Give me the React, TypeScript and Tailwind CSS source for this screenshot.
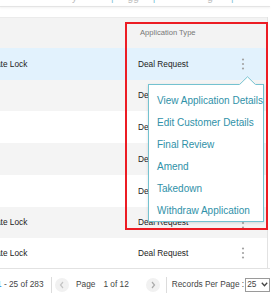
import React from "react";

const rows = [
  { left: "Rate Lock", type: "Deal Request", bg: "bg-[#e2f2fd]", h: "h-[32px]" },
  { left: "", type: "Deal Request", bg: "bg-[#f4f4f4]", h: "h-[31px]" },
  { left: "", type: "Deal Request", bg: "bg-white", h: "h-[32px]" },
  { left: "", type: "Deal Request", bg: "bg-[#f4f4f4]", h: "h-[32px]" },
  { left: "", type: "Deal Request", bg: "bg-white", h: "h-[32px]" },
  { left: "Rate Lock", type: "Deal Request", bg: "bg-[#f4f4f4]", h: "h-[31px]" },
  { left: "Rate Lock", type: "Deal Request", bg: "bg-white", h: "h-[30px]" },
];

const menu = [
  "View Application Details",
  "Edit Customer Details",
  "Final Review",
  "Amend",
  "Takedown",
  "Withdraw Application",
];

function Kebab() {
  return (
    <svg width="4" height="14" viewBox="0 0 4 14" className="shrink-0">
      <circle cx="2" cy="2.5" r="1.1" fill="#a3a3a3" />
      <circle cx="2" cy="7" r="1.1" fill="#a3a3a3" />
      <circle cx="2" cy="11.5" r="1.1" fill="#a3a3a3" />
    </svg>
  );
}

export default function App() {
  return (
    <div className="w-[276px] h-[300px] overflow-hidden bg-white relative font-['Liberation_Sans',Arial,sans-serif] text-[#222]">
      {/* clipped toolbar row */}
      <div className="h-[6px] overflow-hidden">
        <div className="flex items-start -mt-[8px] text-[10px] leading-[12px] text-[#bdbdbd]">
          <span className="ml-[72px]">y</span>
          <span className="ml-[34px] text-[#7cc3d6]">|</span>
          <span className="ml-[14px]">gg</span>
          <span className="ml-[14px] text-[#7cc3d6]">|</span>
          <span className="ml-[52px]">g</span>
          <span className="ml-[18px] text-[#7cc3d6]">|</span>
        </div>
      </div>
      <div className="h-px w-[270px] bg-[#e4e4e4] shadow-[0_1px_2px_rgba(0,0,0,0.08)]" />
      <div className="h-[10px]" />

      {/* table */}
      <div className="w-[268px] border-r border-[#e2e2e2]">
        <div className="flex h-[31px] bg-[#f3f3f3] border-t border-[#ebebeb]">
          <div className="w-[126px]" />
          <div className="flex-1 flex items-center pl-[14px] text-[7.6px] text-[#777]">
            Application Type
          </div>
        </div>
        {rows.map((r, i) => (
          <div key={i} className={`flex ${r.h} ${r.bg}`}>
            <div className="w-[126px] flex items-center overflow-hidden text-[8.3px] text-[#222]">
              {r.left && <span className="ml-[-10px] whitespace-nowrap">{r.left}</span>}
            </div>
            <div className="flex-1 flex items-center justify-between pl-[12px] pr-[22px] text-[8.3px] text-[#1c1c1c]">
              <span className="whitespace-nowrap">{r.type}</span>
              <Kebab />
            </div>
          </div>
        ))}
      </div>

      {/* pagination */}
      <div className="w-[270px] h-[32px] border-t border-[#e2e2e2] flex items-center text-[8.3px] text-[#444] whitespace-nowrap">
        <span className="ml-[-3px] w-[54px] shrink-0">
          <span className="text-[#1e88e5]">1</span> - 25 of 283
        </span>
        <div className="w-px h-[16px] bg-[#dcdcdc] shrink-0" />
        <div className="ml-[3px] w-[14px] h-[14px] rounded-full bg-[#f1f1f1] flex items-center justify-center shrink-0">
          <svg width="6" height="8" viewBox="0 0 6 8">
            <path d="M4 1 L1.5 4 L4 7" fill="none" stroke="#c4c4c4" strokeWidth="1.2" />
          </svg>
        </div>
        <span className="ml-[7px]">Page</span>
        <span className="ml-[8px]">1 of 12</span>
        <div className="ml-[17px] w-[14px] h-[14px] rounded-full bg-[#f1f1f1] flex items-center justify-center shrink-0">
          <svg width="6" height="8" viewBox="0 0 6 8">
            <path d="M2 1 L4.5 4 L2 7" fill="none" stroke="#aaaaaa" strokeWidth="1.2" />
          </svg>
        </div>
        <div className="ml-[6px] w-px h-[16px] bg-[#dcdcdc] shrink-0" />
        <span className="ml-[5px]">Records Per Page :</span>
        <div className="ml-[1px] w-[25px] h-[14px] border border-[#9a9a9a] flex items-center justify-between px-[1px] shrink-0">
          <span>25</span>
          <svg width="7" height="5" viewBox="0 0 7 5">
            <path d="M0.8 0.8 L3.5 3.8 L6.2 0.8" fill="none" stroke="#444" strokeWidth="1.3" />
          </svg>
        </div>
      </div>

      {/* red annotation box */}
      <div className="absolute left-[125px] top-[22px] w-[143px] h-[208px] border-2 border-[#ec1c24] pointer-events-none" />

      {/* popup menu */}
      <div className="absolute left-[148px] top-[84px] w-[116px] border border-[#74c2d0] bg-white pt-[4px] shadow-[0_1px_3px_rgba(0,0,0,0.12)]">
        <svg width="17" height="9" viewBox="0 0 17 9" className="absolute left-[90px] top-[-9px]">
          <path d="M0 9 L8.5 0.7 L17 9 Z" fill="white" />
          <path d="M0.5 8.6 L8.5 0.8 L16.5 8.6" fill="none" stroke="#74c2d0" strokeWidth="1" />
        </svg>
        {menu.map((m) => (
          <div key={m} className="h-[22px] flex items-center pl-[8px] text-[10px] text-[#2f91a8] whitespace-nowrap">
            {m}
          </div>
        ))}
      </div>
    </div>
  );
}
